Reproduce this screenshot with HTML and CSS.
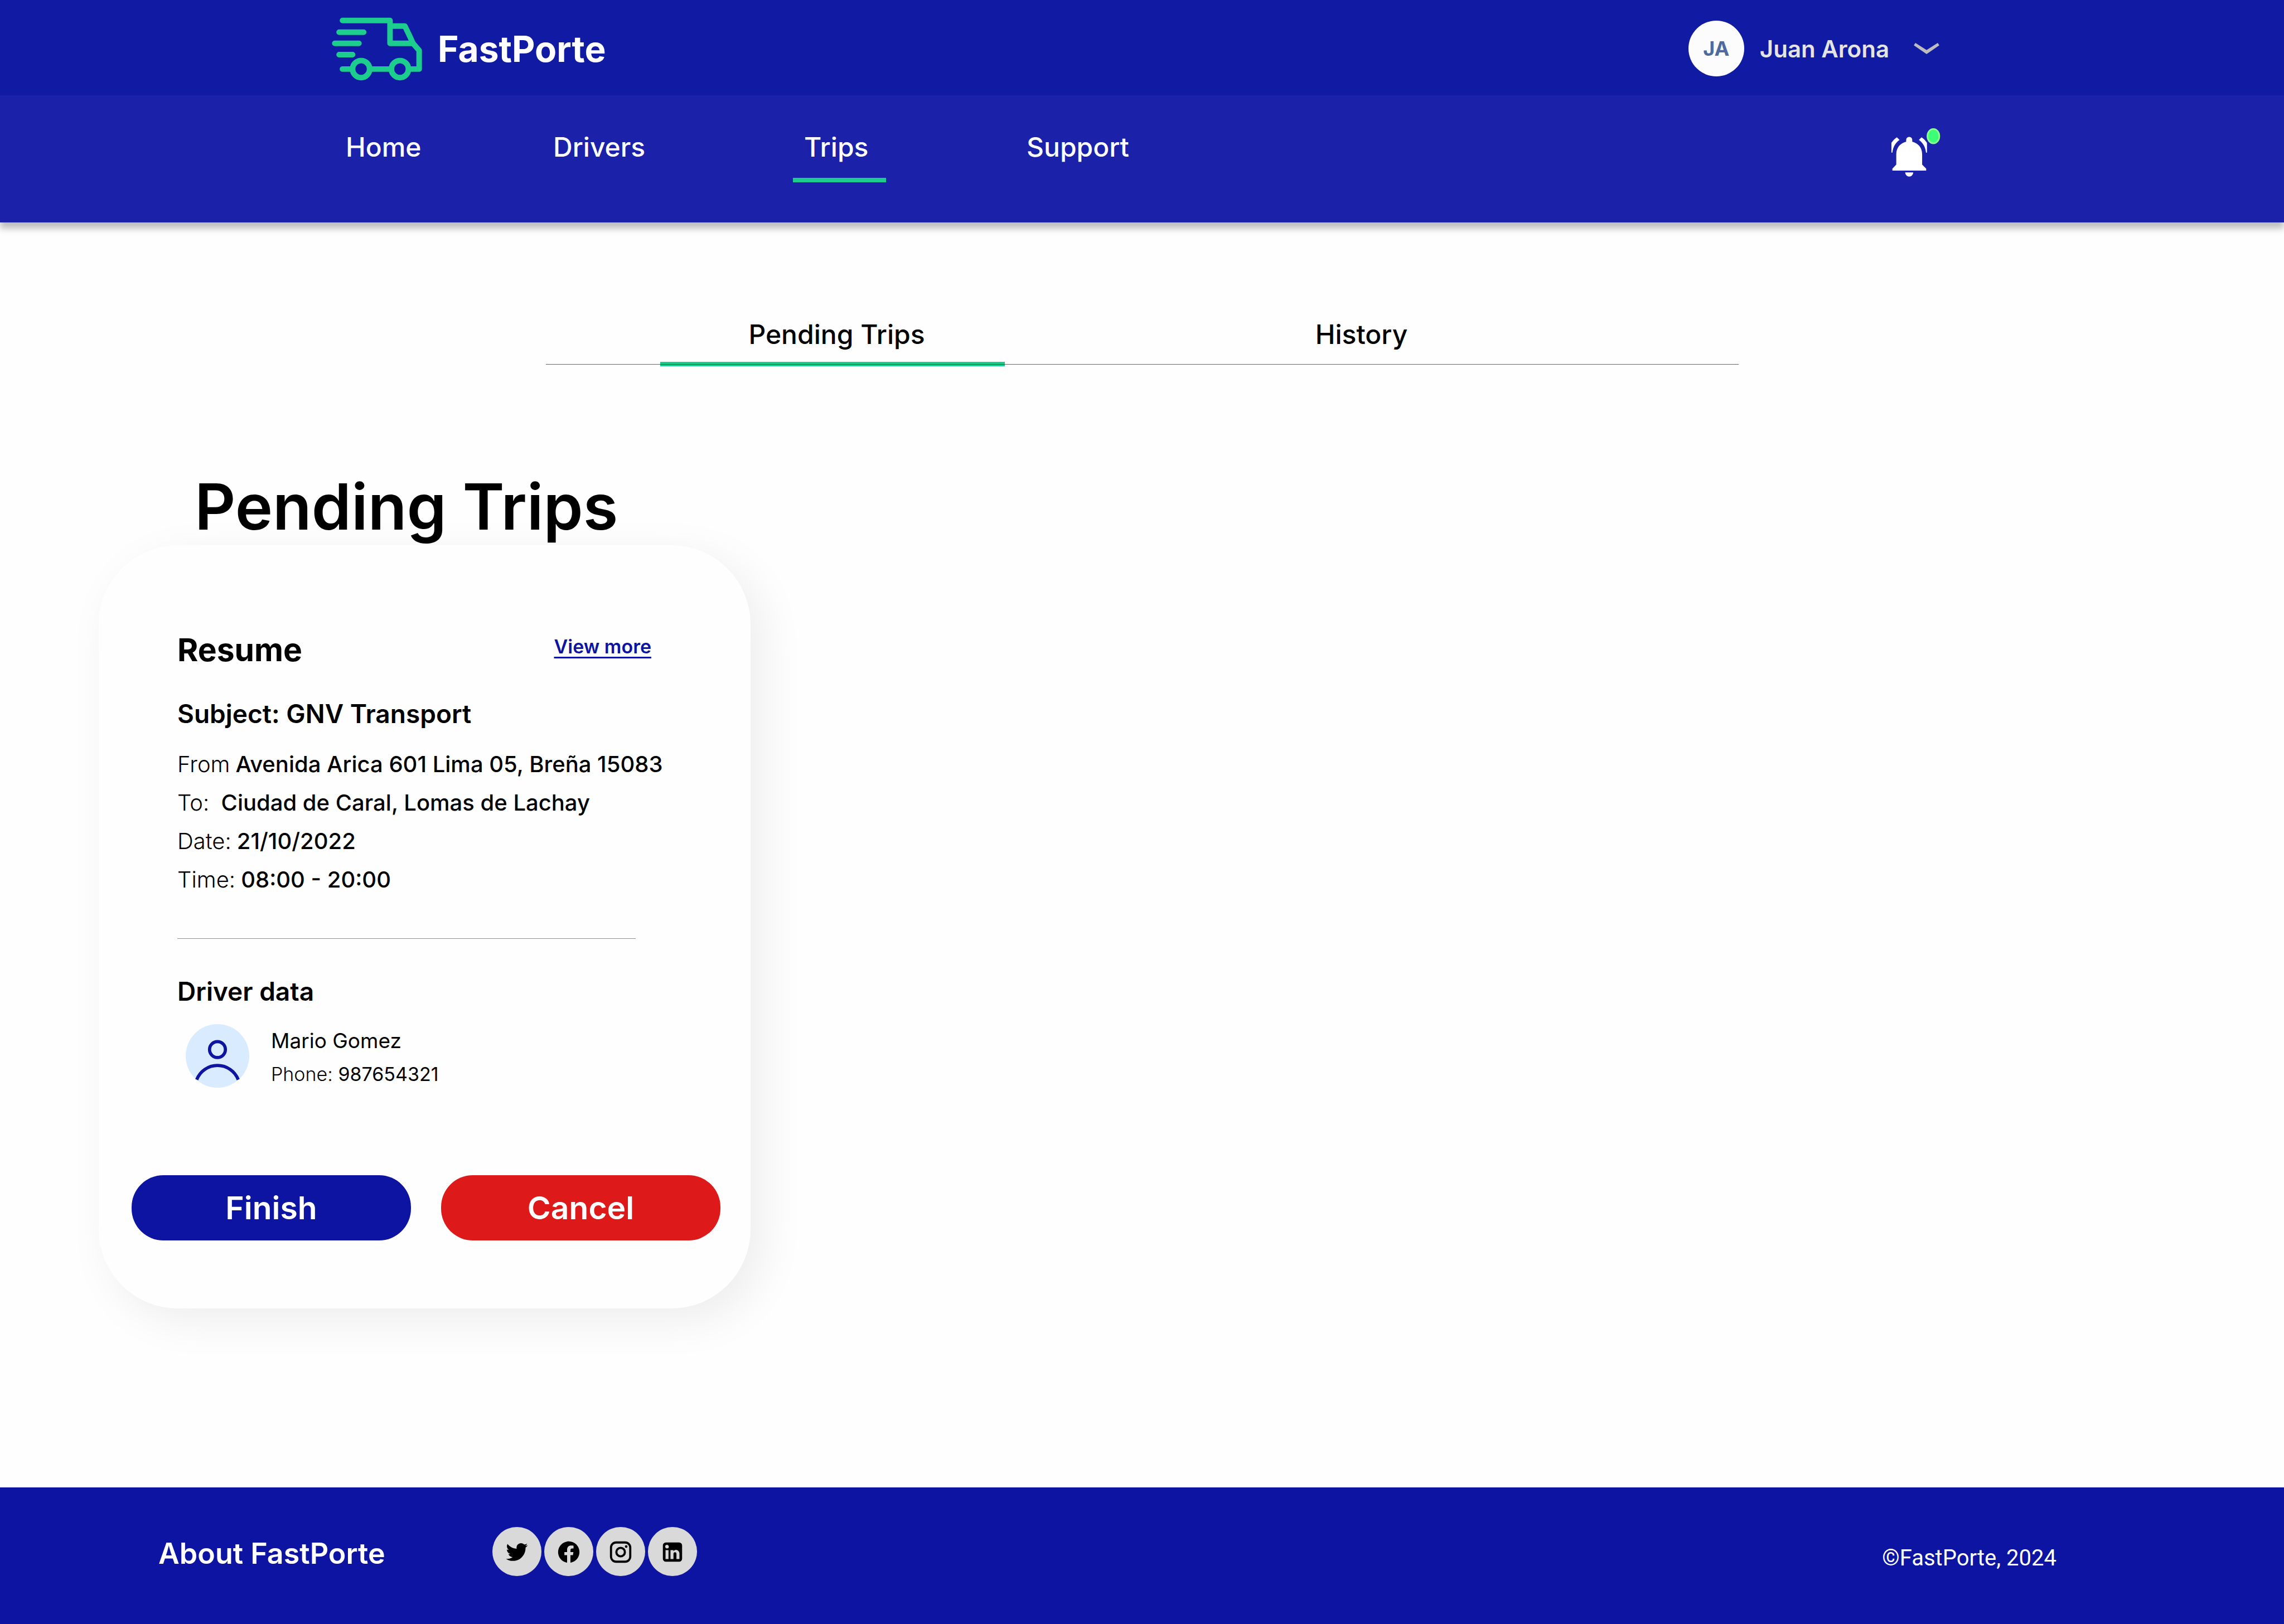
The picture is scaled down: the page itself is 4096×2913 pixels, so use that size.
FILE: index.html
```html
<!DOCTYPE html>
<html lang="en">
<head>
<meta charset="utf-8">
<meta name="viewport" content="width=device-width, initial-scale=1">
<title>FastPorte - Pending Trips</title>
<link rel="stylesheet" href="styles.css">
</head>
<body>
<header class="header">
  <div class="topbar">
    <a class="brand" href="#">
      <svg class="brand-logo" viewBox="0 0 228 160" aria-hidden="true">
        <g fill="none" stroke="currentColor" stroke-width="14" stroke-linecap="round" stroke-linejoin="round">
          <path d="M27 8H147V65.500H205"/>
          <path d="M147 22H184.500L197 48L205 65.500L220.500 83.500V130.500H198" stroke-linecap="butt"/>
          <path d="M18.500 37.500H80.500M7.500 65.500H68.500M18.500 94H52.500M27 130.500H48"/>
          <path d="M98 130.500H148" stroke-linecap="butt"/>
          <circle cx="74" cy="130.500" r="21.500"/>
          <circle cx="172" cy="130.500" r="21.500"/>
        </g>
      </svg>
      <span>FastPorte</span>
    </a>
    <button class="account" type="button">
      <span class="account-initials">JA</span>
      <span class="account-name">Juan Arona</span>
      <svg class="account-chevron" viewBox="0 0 64 28" aria-hidden="true"><path fill="currentColor" d="M4 0L32 18L60 0L64 6L32 28L0 6Z"/></svg>
    </button>
  </div>
  <div class="navbar">
    <nav class="nav" aria-label="Main">
      <a class="nav-link" href="#">Home</a>
      <a class="nav-link" href="#">Drivers</a>
      <a class="nav-link is-active" href="#" aria-current="page">Trips</a>
      <a class="nav-link" href="#">Support</a>
    </nav>
    <button class="bell" type="button" aria-label="Notifications">
      <svg viewBox="0 0 124 124" aria-hidden="true">
        <g fill="#fff" transform="translate(0 22)">
          <path d="M37.200 12V7.500a7.700 7.700 0 0 1 15.400 0V12C68 15.500 77.600 27.500 77.600 43.600V70L87.800 80V85H2.400V80L12.200 70V43.600C12.200 27.500 21.800 15.500 37.200 12Z"/>
          <path d="M34.700 89.600H55.100a10.200 10.700 0 0 1-20.400 0Z"/>
          <path d="M13.800 1L20.400 7.700C9.500 15.500 3.500 26.500 2.500 39.800H0V15C3.500 9.500 8.500 4.500 13.800 1Z"/>
          <path d="M76 1L69.400 7.700C80.300 15.500 86.300 26.500 87.300 39.800H89.800V15C86.300 9.500 81.300 4.500 76 1Z"/>
        </g>
        <ellipse cx="106" cy="20" rx="15" ry="18" fill="#3dff77" stroke="#8cff8c" stroke-width="4"/>
      </svg>
    </button>
  </div>
</header>

<main class="main">
  <nav class="tabs" aria-label="Trips">
    <a class="tab is-active" href="#" aria-current="page">Pending Trips</a>
    <a class="tab" href="#">History</a>
  </nav>

  <section class="trips">
    <h1 class="trips-title">Pending Trips</h1>
    <article class="card">
      <div class="card-body">
        <div class="card-head">
          <h2 class="card-title">Resume</h2>
          <a class="card-more" href="#">View more</a>
        </div>
        <h3 class="card-subtitle">Subject: GNV Transport</h3>
        <dl class="details">
          <div class="detail"><dt>From</dt><dd>Avenida Arica 601 Lima 05, Breña 15083</dd></div>
          <div class="detail"><dt>To:&nbsp;</dt><dd>Ciudad de Caral, Lomas de Lachay</dd></div>
          <div class="detail"><dt>Date:</dt><dd>21/10/2022</dd></div>
          <div class="detail"><dt>Time:</dt><dd>08:00 - 20:00</dd></div>
        </dl>
        <hr class="divider">
        <h3 class="card-subtitle">Driver data</h3>
        <div class="driver">
          <svg class="driver-avatar" viewBox="0 0 160 160" aria-hidden="true">
            <circle cx="80" cy="80" r="80" fill="#d9ebff"/>
            <g fill="none" stroke="#0c14a1" stroke-width="8">
              <circle cx="80" cy="64" r="20"/>
              <path d="M27.800 139.800A56 56 0 0 1 132.200 139.800"/>
            </g>
          </svg>
          <div class="driver-text">
            <p class="driver-name">Mario Gomez</p>
            <p class="driver-phone"><span class="driver-label">Phone:</span> 987654321</p>
          </div>
        </div>
      </div>
      <div class="actions">
        <button class="btn btn-finish" type="button">Finish</button>
        <button class="btn btn-cancel" type="button">Cancel</button>
      </div>
    </article>
  </section>
</main>

<footer class="footer">
  <a class="footer-about" href="#">About FastPorte</a>
  <div class="social">
    <a class="social-link" href="#" aria-label="Twitter">
      <svg viewBox="0 0 24 24" aria-hidden="true"><path d="M22.162 5.656a8.384 8.384 0 0 1-2.402.658A4.196 4.196 0 0 0 21.600 4c-.82.488-1.719.83-2.656 1.015a4.182 4.182 0 0 0-7.126 3.814 11.874 11.874 0 0 1-8.620-4.370 4.168 4.168 0 0 0-.566 2.103c0 1.450.738 2.731 1.860 3.481a4.168 4.168 0 0 1-1.894-.523v.052a4.185 4.185 0 0 0 3.355 4.101 4.210 4.210 0 0 1-1.890.072A4.185 4.185 0 0 0 7.970 16.650a8.394 8.394 0 0 1-6.191 1.732 11.830 11.830 0 0 0 6.410 1.880c7.693 0 11.900-6.373 11.900-11.900 0-.180-.005-.362-.013-.540a8.496 8.496 0 0 0 2.087-2.165z"/></svg>
    </a>
    <a class="social-link" href="#" aria-label="Facebook">
      <svg viewBox="0 0 24 24" aria-hidden="true"><path d="M12 2C6.477 2 2 6.477 2 12c0 4.991 3.657 9.128 8.438 9.879V14.890h-2.540V12h2.540V9.797c0-2.506 1.492-3.890 3.777-3.890 1.094 0 2.238.195 2.238.195v2.460h-1.260c-1.243 0-1.630.771-1.630 1.562V12h2.773l-.443 2.890h-2.330v6.989C18.343 21.129 22 16.990 22 12c0-5.523-4.477-10-10-10z"/></svg>
    </a>
    <a class="social-link" href="#" aria-label="Instagram">
      <svg viewBox="0 0 24 24" aria-hidden="true">
        <rect x="3" y="3" width="18" height="18" rx="4.800" fill="none" stroke="#000" stroke-width="2"/>
        <circle cx="12" cy="12" r="4" fill="none" stroke="#000" stroke-width="2"/>
        <circle cx="17.200" cy="6.800" r="1.250"/>
      </svg>
    </a>
    <a class="social-link" href="#" aria-label="LinkedIn">
      <svg viewBox="0 0 24 24" aria-hidden="true"><path d="M18.200 3A2.800 2.800 0 0 1 21 5.800V18.200A2.800 2.800 0 0 1 18.200 21H5.800A2.800 2.800 0 0 1 3 18.200V5.800A2.800 2.800 0 0 1 5.800 3ZM18.500 18.500v-5.300a3.260 3.260 0 0 0-3.260-3.260c-.85 0-1.840.52-2.320 1.300v-1.110h-2.790v8.370h2.790v-4.930c0-.77.62-1.400 1.390-1.400a1.400 1.400 0 0 1 1.400 1.400v4.930h2.790M6.880 8.560a1.680 1.680 0 0 0 1.680-1.680c0-.93-.75-1.690-1.680-1.690a1.690 1.690 0 0 0-1.690 1.690c0 .93.76 1.680 1.690 1.680m1.390 9.940v-8.370H5.500v8.370h2.770z"/></svg>
    </a>
  </div>
  <p class="copyright">©FastPorte, 2024</p>
</footer>
</body>
</html>
```
FILE: styles.css
```css
:root {
  --blue: #0c14a1;
  --green: #1ccd8e;
  --paper: #fefefe;
}

* {
  box-sizing: border-box;
}

body {
  margin: 0;
  min-height: 100vh;
  display: flex;
  flex-direction: column;
  background: var(--paper);
  color: #000;
  font-family: Inter, "Liberation Sans", sans-serif;
  font-optical-sizing: none;
}

h1, h2, h3, p, dl, dd {
  margin: 0;
}

a {
  color: inherit;
  text-decoration: none;
}

button {
  margin: 0;
  padding: 0;
  border: 0;
  background: none;
  color: inherit;
  font: inherit;
  cursor: pointer;
}

svg {
  display: block;
  flex: none;
}

/* Header */
.header {
  color: #fff;
  box-shadow: 0 11px 11px rgba(0, 0, 0, 0.25);
}

.topbar {
  display: flex;
  align-items: center;
  justify-content: space-between;
  height: 171px;
  padding: 3px 618px 0 595px;
  background: #111aa2;
}

.brand {
  display: flex;
  align-items: center;
  gap: 28px;
  padding-top: 2px;
  font-size: 64px;
  line-height: 76px;
  font-weight: 700;
}

.brand-logo {
  width: 162px;
  height: 114px;
  color: var(--green);
}

.account {
  display: flex;
  align-items: center;
}

.account-initials {
  display: grid;
  place-items: center;
  width: 100px;
  height: 100px;
  margin-right: 28px;
  border-radius: 50%;
  background: #fcfcfc;
  color: #4f6b9e;
  font-size: 36px;
  font-weight: 700;
}

.account-name {
  margin-right: 44px;
  color: #e4e4e4;
  font-size: 42px;
  font-weight: 600;
}

.account-chevron {
  width: 46px;
  height: 20px;
  color: #bdbdbd;
}

.navbar {
  display: flex;
  align-items: flex-start;
  justify-content: space-between;
  height: 228px;
  padding: 59px 616px 0 600px;
  background: #1c21a9;
}

.nav {
  display: grid;
  grid-template-columns: 372px 450px 399px auto;
  justify-items: start;
  padding-top: 5px;
}

.nav-link {
  padding: 0 32px 26px 20px;
  border-bottom: 8px solid transparent;
  font-size: 48px;
  line-height: 58px;
  font-weight: 500;
}

.nav-link.is-active {
  border-color: var(--green);
}

.bell {
  width: 88px;
  height: 88px;
}

/* Tabs */
.main {
  flex: 1;
  padding: 172px 177px 0;
}

.tabs {
  position: relative;
  display: flex;
  gap: 323px;
  max-width: 2139px;
  margin: 0 auto;
  padding-left: 205px;
}

.tabs::after {
  content: "";
  position: absolute;
  right: 0;
  bottom: 3px;
  left: 0;
  height: 1px;
  background: rgba(0, 0, 0, 0.6);
}

.tab {
  width: 618px;
  padding: 0 0 20px 16px;
  border-bottom: 8px solid transparent;
  font-size: 48px;
  line-height: 58px;
  font-weight: 500;
  text-align: center;
}

.tab.is-active {
  border-color: var(--green);
}

/* Trip card */
.trips {
  padding-top: 183px;
}

.trips-title {
  padding-left: 172px;
  font-size: 114px;
  line-height: 138px;
  font-weight: 600;
}

.card {
  max-width: 1169px;
  padding: 153px 54px 122px 59px;
  border-radius: 142px;
  background: var(--paper);
  box-shadow: 22px 22px 80px rgba(0, 0, 0, 0.07);
}

.card-body {
  padding-left: 82px;
}

.card-head {
  display: flex;
  align-items: flex-start;
  justify-content: space-between;
  margin-bottom: 52px;
  padding-right: 124px;
}

.card-title {
  font-size: 57px;
  line-height: 69px;
  font-weight: 700;
}

.card-more {
  margin-top: 8px;
  color: var(--blue);
  font-size: 34px;
  line-height: 41px;
  font-weight: 600;
  text-decoration: underline;
  text-decoration-thickness: 3px;
  text-underline-offset: 6px;
  text-decoration-skip-ink: none;
}

.card-subtitle {
  font-size: 46px;
  line-height: 56px;
  font-weight: 600;
}

.details {
  margin-top: 28px;
  font-size: 40px;
  line-height: 69px;
  white-space: nowrap;
}

.detail {
  display: flex;
  gap: 10px;
}

.detail dt {
  font-weight: 300;
}

.detail dd {
  font-weight: 500;
}

.divider {
  height: 1px;
  margin: 71px 152px 66px 0;
  border: 0;
  background: #8c9199;
}

.driver {
  display: flex;
  align-items: flex-start;
  gap: 39px;
  margin-top: 31px;
  padding-left: 15px;
}

.driver-avatar {
  width: 114px;
  height: 114px;
}

.driver-text {
  line-height: 60px;
}

.driver-name {
  font-size: 37px;
}

.driver-phone {
  font-size: 34px;
}

.driver-label {
  font-weight: 300;
}

.actions {
  display: grid;
  grid-template-columns: 1fr 1fr;
  gap: 54px;
  margin-top: 151px;
}

.btn {
  height: 117px;
  border-radius: 57px;
  color: #fff;
  font-size: 57px;
  line-height: 69px;
  font-weight: 600;
}

.btn-finish {
  background: var(--blue);
}

.btn-cancel {
  background: #dd1919;
}

/* Footer */
.footer {
  display: flex;
  align-items: center;
  padding: 71px 408px 86px 284px;
  background: var(--blue);
  color: #fff;
}

.footer-about {
  padding-top: 7px;
  font-size: 52px;
  line-height: 62px;
  font-weight: 600;
}

.social {
  display: flex;
  gap: 5px;
  margin-left: 192px;
}

.social-link {
  display: grid;
  place-items: center;
  width: 88px;
  height: 88px;
  padding-top: 2px;
  border-radius: 50%;
  background: #d9d9d9;
}

.social-link svg {
  width: 46px;
  height: 46px;
}

.copyright {
  margin-left: auto;
  padding-top: 22px;
  font-family: Roboto, "Liberation Sans", sans-serif;
  font-size: 40px;
  line-height: 47px;
}
```
